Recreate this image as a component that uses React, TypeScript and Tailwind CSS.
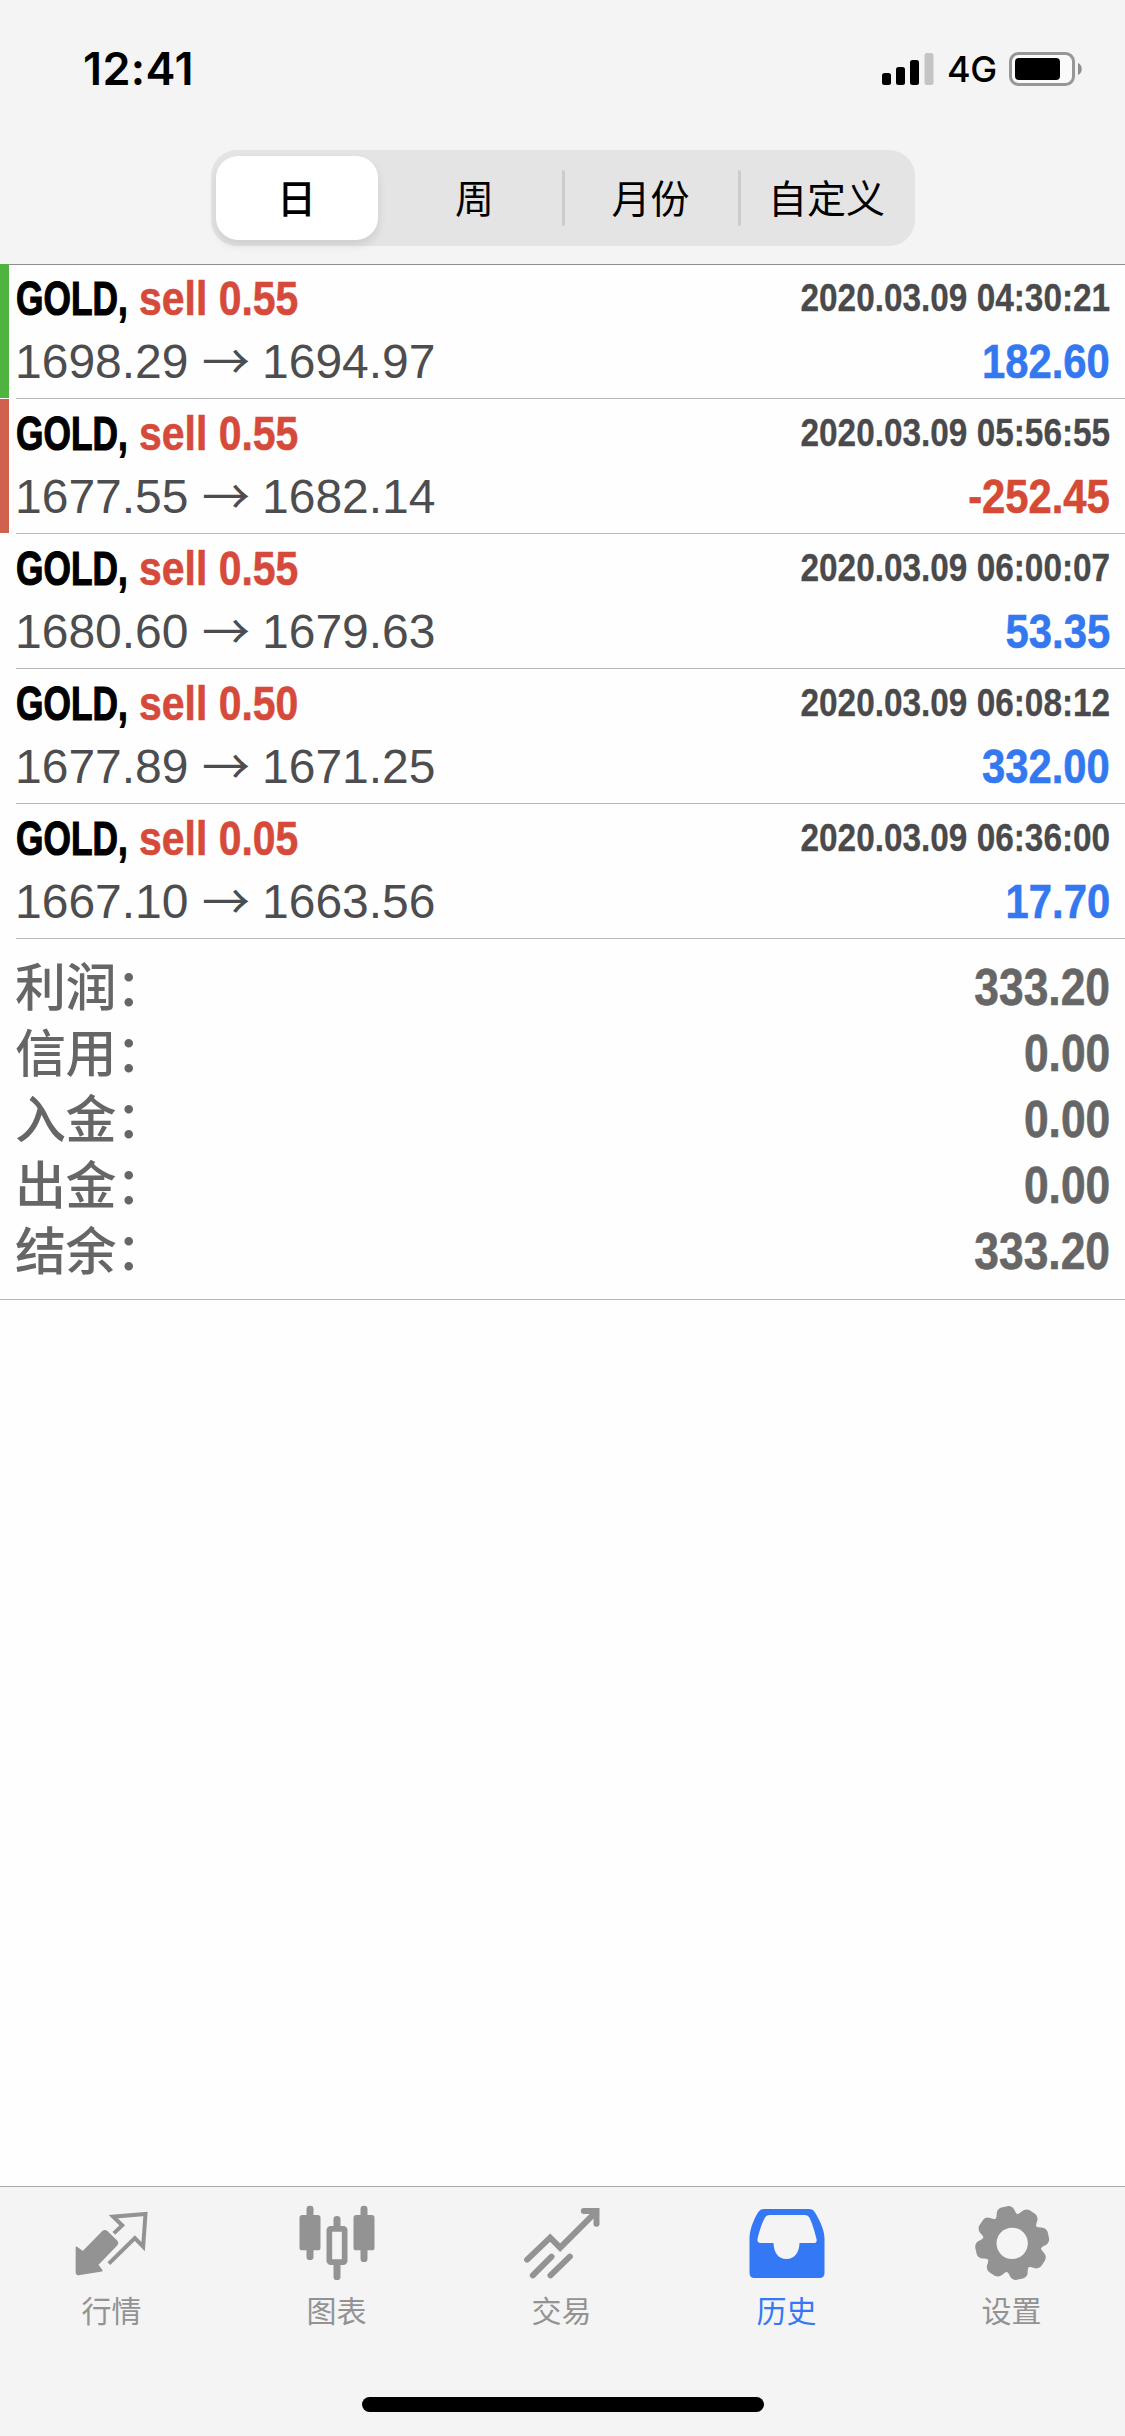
type Deal = {
  volume: string;
  open: string;
  close: string;
  time: string;
  profit: string;
  bar?: string;
};

const DEALS: Deal[] = [
  { volume: '0.55', open: '1698.29', close: '1694.97', time: '2020.03.09 04:30:21', profit: '182.60', bar: 'bg-[#4eb33f]' },
  { volume: '0.55', open: '1677.55', close: '1682.14', time: '2020.03.09 05:56:55', profit: '-252.45', bar: 'bg-[#d1614f]' },
  { volume: '0.55', open: '1680.60', close: '1679.63', time: '2020.03.09 06:00:07', profit: '53.35' },
  { volume: '0.50', open: '1677.89', close: '1671.25', time: '2020.03.09 06:08:12', profit: '332.00' },
  { volume: '0.05', open: '1667.10', close: '1663.56', time: '2020.03.09 06:36:00', profit: '17.70' },
];

const SUMMARY = [
  { label: '利润：', value: '333.20' },
  { label: '信用：', value: '0.00' },
  { label: '入金：', value: '0.00' },
  { label: '出金：', value: '0.00' },
  { label: '结余：', value: '333.20' },
];

const PERIODS = ['日', '周', '月份', '自定义'];

function StatusBar() {
  return (
    <div className="flex h-[150px] items-start justify-between pt-[46px] pr-[42px] pl-[83px]">
      <span className="font-['Inter',sans-serif] text-[45px] leading-[46px] font-semibold tracking-[0.4px]">12:41</span>
      <div className="flex h-[46px] items-center">
        <svg className="h-[34px] w-[52px]" viewBox="0 0 52 34">
          <rect x="0" y="21" width="9" height="12" rx="2.5" />
          <rect x="14" y="15" width="9" height="18" rx="2.5" />
          <rect x="28" y="8" width="9" height="25" rx="2.5" />
          <rect x="42.5" y="1" width="9" height="32" rx="2.5" fill="#c4c4c4" />
        </svg>
        <span className="ml-[13px] w-[48px] font-['Inter',sans-serif] text-[36px] leading-[48px] font-medium tracking-[-0.5px]">4G</span>
        <svg className="ml-[14px] h-[36px] w-[74px]" viewBox="0 0 74 36">
          <rect x="1.5" y="2.5" width="63" height="31" rx="8" fill="#fafafa" stroke="#979797" strokeWidth="3" />
          <rect x="6" y="7" width="45" height="22" rx="4" />
          <path d="M69 12c5 2 5 10 0 12z" fill="#8e8e8e" />
        </svg>
      </div>
    </div>
  );
}

function PeriodPicker() {
  return (
    <div className="mx-auto flex h-24 w-[704px] rounded-[26px] bg-[#e4e4e4] text-[39px]">
      {PERIODS.map((p, i) => (
        <div key={p} className="relative flex flex-1 items-center justify-center">
          {i === 0 && (
            <div className="absolute top-[6px] bottom-[6px] left-[5px] w-[162px] rounded-[22px] bg-white shadow-[0_5px_10px_rgba(0,0,0,0.1)]" />
          )}
          {i > 1 && <div className="absolute top-5 -left-px h-14 w-[3px] rounded-full bg-[#cdcdcd]" />}
          <span className={`relative bottom-[2px] leading-none ${i === 0 ? 'right-[2px] font-medium' : 'font-normal'}`}>{p}</span>
        </div>
      ))}
    </div>
  );
}

function DealRow({ deal }: { deal: Deal }) {
  const loss = deal.profit.startsWith('-');
  return (
    <div className="flex h-[135px]">
      <div className={`mb-px w-[9px] ${deal.bar ?? ''}`} />
      <div className="ml-[7px] flex-1 border-b border-[#b9b9bb] pt-[5px] pr-[15px] font-['Liberation_Sans',sans-serif]">
        <div className="flex h-[60px] justify-between text-[49px] leading-[58px] font-bold whitespace-nowrap">
          <div className="flex">
            <span className="-mr-[32px] w-[155px] origin-left scale-x-[0.72] text-black [-webkit-text-stroke:1.2px]">GOLD,</span>
            <span className="origin-left scale-x-[0.835] text-[#d54a3a] [-webkit-text-stroke:0.6px]">sell {deal.volume}</span>
          </div>
          <span className="origin-right scale-x-[0.855] text-[39px] [-webkit-text-stroke:0.3px] text-[#4a4a4c]">{deal.time}</span>
        </div>
        <div className="mt-px flex h-[62px] justify-between text-[48px] leading-[64px] whitespace-nowrap">
          <div className="flex text-[#4d4d4f]">
            <span className="-ml-px w-[187px]">{deal.open}</span>
            <span className="w-[60px] font-['Noto_Sans_CJK_SC',sans-serif] leading-[57px]">→</span>
            <span>{deal.close}</span>
          </div>
          <span className={`origin-right scale-x-[0.87] font-bold [-webkit-text-stroke:0.6px] ${loss ? 'text-[#d54a35]' : 'text-[#3478f0]'}`}>
            {deal.profit}
          </span>
        </div>
      </div>
    </div>
  );
}

function Summary() {
  return (
    <div className="h-[361px] border-b border-[#b9b9bb] pt-[15px] pr-[15px] pl-[15px] text-[#666]">
      {SUMMARY.map(({ label, value }) => (
        <div key={label} className="flex h-[66px] justify-between">
          <span className="text-[51px] leading-[60px] font-medium tracking-[-0.5px]">{label}</span>
          <span className="origin-right scale-x-[0.87] font-['Liberation_Sans',sans-serif] text-[51px] leading-[68px] font-bold [-webkit-text-stroke:0.6px]">{value}</span>
        </div>
      ))}
    </div>
  );
}

function QuotesIcon() {
  return (
    <svg className="size-[84px]" viewBox="211.5 96 252 252">
      <path
        d="M228 232L247 246L308 184Q313 180 319 185L349 214Q353 219 349 224L291 284L304 302L234 313Q228 314 228 307Z"
        fill="currentColor"
        stroke="currentColor"
        strokeWidth="5"
        strokeLinejoin="round"
      />
      <path d="M340 190L365 166L338 140L435 132L428 230L403 204L325 281" fill="none" stroke="currentColor" strokeWidth="12" />
    </svg>
  );
}

function ChartIcon() {
  return (
    <svg className="size-[84px]" viewBox="886.5 96 252 252" fill="currentColor">
      <rect x="918" y="107" width="21" height="163" rx="10" />
      <rect x="897" y="135" width="63" height="106" rx="8" />
      <rect x="1080" y="107" width="21" height="169" rx="10" />
      <rect x="1059" y="135" width="63" height="106" rx="8" />
      <rect x="999" y="138" width="21" height="40" rx="10" />
      <rect x="999" y="275" width="21" height="55" rx="10" />
      <rect x="986.5" y="176.5" width="46" height="100" rx="4" fill="none" stroke="currentColor" strokeWidth="17" />
    </svg>
  );
}

function TradeIcon() {
  return (
    <svg className="size-[84px]" viewBox="361.5 96 252 252" fill="none" stroke="currentColor" strokeWidth="18" strokeLinecap="round">
      <path d="M380 269L449 203L479 233L582 130" />
      <path d="M550 123H588V161" strokeLinejoin="miter" />
      <path d="M397 316L453 260M450 316L508 260" />
    </svg>
  );
}

function HistoryIcon() {
  return (
    <svg className="size-[84px]" viewBox="61.5 96 252 252" fill="currentColor">
      <path
        fillRule="evenodd"
        d="M116 117H250Q262 117 268 127C284 154 297 181 297 207V309Q297 324 282 324H87Q72 324 72 309V207C72 181 83 151 98 127Q104 117 116 117ZM131 135Q122 135 118 143C109 159 101 185 96 207Q94 219 106 219H144C145 248 158 267 183 267S221 248 222 219H264Q276 219 273 207C268 185 260 159 252 143Q248 135 239 135Z"
      />
    </svg>
  );
}

// eight rounded lobes around a hole
function gearPath(cx: number, cy: number) {
  const point = (deg: number, r: number) => {
    const a = ((deg - 90) * Math.PI) / 180;
    return `${(cx + r * Math.cos(a)).toFixed(1)} ${(cy + r * Math.sin(a)).toFixed(1)}`;
  };
  let d = `M${point(-34.5, 84)}`;
  for (let i = 0; i < 8; i++) {
    const c = -12 + i * 45;
    d += `Q${point(c - 17, 87)} ${point(c - 14, 98)}Q${point(c - 11, 108)} ${point(c - 5, 108)}L${point(c + 5, 108)}`;
    d += `Q${point(c + 11, 108)} ${point(c + 14, 98)}Q${point(c + 17, 87)} ${point(c + 22.5, 84)}`;
  }
  return d + 'Z';
}

function SettingsIcon() {
  return (
    <svg className="size-[84px]" viewBox="736.5 96 252 252">
      <path d={gearPath(860, 219)} fill="currentColor" stroke="currentColor" strokeWidth="7" strokeLinejoin="round" />
      <circle cx="860" cy="220" r="47" fill="#f5f5f5" />
    </svg>
  );
}

const TABS = [
  { label: '行情', Icon: QuotesIcon },
  { label: '图表', Icon: ChartIcon },
  { label: '交易', Icon: TradeIcon },
  { label: '历史', Icon: HistoryIcon, active: true },
  { label: '设置', Icon: SettingsIcon },
];

function TabBar() {
  return (
    <nav className="flex h-[250px] flex-col border-t border-[#a9a9ab] bg-[#f4f4f4]">
      <div className="flex pt-[15px]">
        {TABS.map(({ label, Icon, active }) => (
          <div key={label} className={`flex flex-1 flex-col items-center ${active ? 'text-[#3478f6]' : 'text-[#939393]'}`}>
            <Icon />
            <span className="mt-[2px] mr-[2px] text-[30px] leading-[42px]">{label}</span>
          </div>
        ))}
      </div>
      <div className="mx-auto mt-auto mb-6 h-[15px] w-[402px] rounded-full bg-black" />
    </nav>
  );
}

export default function App() {
  return (
    <div className="flex h-[2436px] w-[1125px] flex-col overflow-hidden bg-[#fefefe] font-['Noto_Sans_CJK_SC',sans-serif] text-black">
      <header className="h-[265px] border-b border-[#8e8e90] bg-[#f4f4f4]">
        <StatusBar />
        <PeriodPicker />
      </header>
      <main className="-mt-px flex-1">
        {DEALS.map((deal) => (
          <DealRow key={deal.time} deal={deal} />
        ))}
        <Summary />
      </main>
      <TabBar />
    </div>
  );
}
